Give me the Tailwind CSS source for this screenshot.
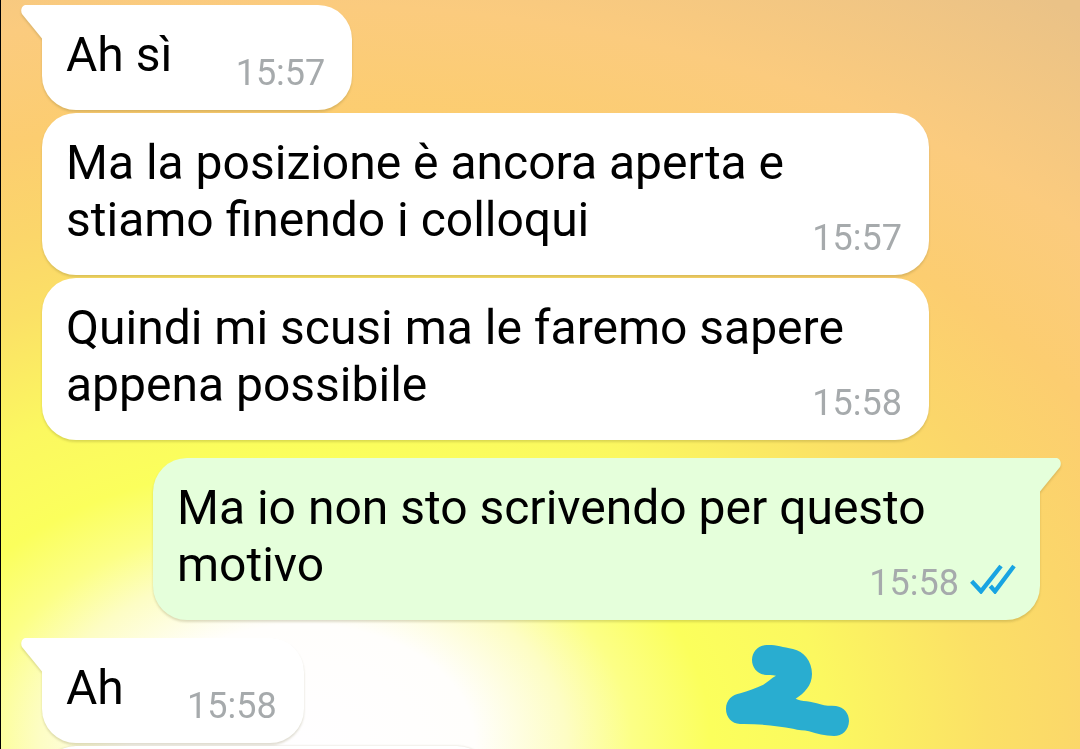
<!DOCTYPE html>
<html lang="it">

<head>
  <meta charset="UTF-8">
  <meta name="viewport" content="width=device-width, initial-scale=1.0">
  <title>Chat</title>
  <script src="https://cdn.jsdelivr.net/npm/@tailwindcss/browser@4"></script>
</head>

<body class="font-[Roboto,sans-serif] text-black">

  <main class="relative h-screen overflow-hidden border-l border-black bg-[radial-gradient(ellipse_122%_120%_at_28%_99%,#fffeff_0%,#fffefc_13%,#fdfdc4_20%,#fcff86_25%,#fbff5c_31%,#fbf860_40%,#fbe066_52%,#fbd66a_60%,#fccd70_70%,#fbcb7e_82%,#eac287_100%)]">

    <!-- Messages -->
    <ul class="flex flex-col items-start pt-[5px] pr-10 pl-[41px]">

      <li class="relative max-w-[887px] drop-shadow-[0_2px_1px_rgba(90,80,20,0.2)]">
        <svg class="absolute top-0 -left-[21px] h-[34px] w-[22px]" viewBox="0 0 22 34" fill="#fff" aria-hidden="true">
          <path d="M22 0H5C1 0-1 5 1 9L21 33.500H22Z" />
        </svg>
        <div class="rounded-[34px] rounded-tl-none bg-white px-6 pt-[21px] pb-[27px]">
          <p class="text-[48px] leading-[57px]">Ah sì<span class="inline-block w-[156px]"></span></p>
          <time class="absolute right-[27px] bottom-4 text-[36px] leading-[42px] text-[#a6aaac]">15:57</time>
        </div>
      </li>

      <li class="relative mt-[3px] max-w-[887px] drop-shadow-[0_2px_1px_rgba(90,80,20,0.2)]">
        <div class="rounded-[34px] bg-white px-6 pt-[21px] pb-[27px]">
          <p class="text-[48px] leading-[57px]">Ma la posizione è ancora aperta e stiamo finendo i colloqui<span class="inline-block w-[156px]"></span></p>
          <time class="absolute right-[27px] bottom-4 text-[36px] leading-[42px] text-[#a6aaac]">15:57</time>
        </div>
      </li>

      <li class="relative mt-[3px] max-w-[887px] drop-shadow-[0_2px_1px_rgba(90,80,20,0.2)]">
        <div class="rounded-[34px] bg-white px-6 pt-[21px] pb-[27px]">
          <p class="text-[48px] leading-[57px]">Quindi mi scusi ma le faremo sapere appena possibile<span class="inline-block w-[156px]"></span></p>
          <time class="absolute right-[27px] bottom-4 text-[36px] leading-[42px] text-[#a6aaac]">15:58</time>
        </div>
      </li>

      <!-- Sent message -->
      <li class="relative mt-[18px] max-w-[887px] self-end drop-shadow-[0_2px_1px_rgba(90,80,20,0.2)]">
        <svg class="absolute top-0 -right-[21px] h-[34px] w-[22px]" viewBox="0 0 22 34" fill="#e5ffdb" aria-hidden="true">
          <path d="M0 0H17C21 0 23 5 21 9L1 33.500H0Z" />
        </svg>
        <div class="rounded-[34px] rounded-tr-none bg-[#e5ffdb] px-6 pt-[21px] pb-[27px]">
          <p class="text-[48px] leading-[57px]">Ma io non sto scrivendo per questo motivo<span class="inline-block w-[210px]"></span></p>
          <div class="absolute right-6 bottom-4 flex items-center gap-[11px]">
            <time class="text-[36px] leading-[42px] text-[#a6aaac]">15:58</time>
            <svg class="h-[30px] w-[46px] -translate-y-1" viewBox="331 343 138 90" fill="none" stroke="#18a4e2" stroke-width="13" role="img" aria-label="Letto">
              <path d="M336 395L364 425L424 349M392 409L406 425L463 349" />
            </svg>
          </div>
        </div>
      </li>

      <li class="relative mt-[18px] max-w-[887px] drop-shadow-[0_2px_1px_rgba(90,80,20,0.2)]">
        <svg class="absolute top-0 -left-[21px] h-[34px] w-[22px]" viewBox="0 0 22 34" fill="#fff" aria-hidden="true">
          <path d="M22 0H5C1 0-1 5 1 9L21 33.500H22Z" />
        </svg>
        <div class="rounded-[34px] rounded-tl-none bg-white px-6 pt-[21px] pb-[27px]">
          <p class="text-[48px] leading-[57px]">Ah<span class="inline-block w-[156px]"></span></p>
          <time class="absolute right-[27px] bottom-4 text-[36px] leading-[42px] text-[#a6aaac]">15:58</time>
        </div>
      </li>

      <!-- Next message, below the fold -->
      <li class="mt-[3px] h-[105px] w-[45%] rounded-[34px] bg-white drop-shadow-[0_0_1px_rgba(90,80,20,0.2)]"></li>
    </ul>

    <!-- Hand-drawn number -->
    <svg class="absolute top-[643px] left-[724px] h-[94px] w-[126px]" viewBox="75 39 378 282" fill="#29add0" role="img" aria-label="2">
      <path d="M200 45C228 44 246 51 279 57C311 64 336 93 336 132C336 166 313 190 287 206C305 215 333 212 361 223C376 229 391 227 408 228C432 232 447 250 447 273C446 300 427 318 402 318C375 318 350 311 327 304C311 299 296 302 279 296C233 288 180 281 120 282C95 281 78 262 78 237C78 211 96 194 121 190C144 183 167 174 190 164C203 156 214 144 228 137C216 133 205 136 192 134C170 129 156 111 156 89C157 65 175 46 200 45Z" />
    </svg>
  </main>

</body>

</html>
